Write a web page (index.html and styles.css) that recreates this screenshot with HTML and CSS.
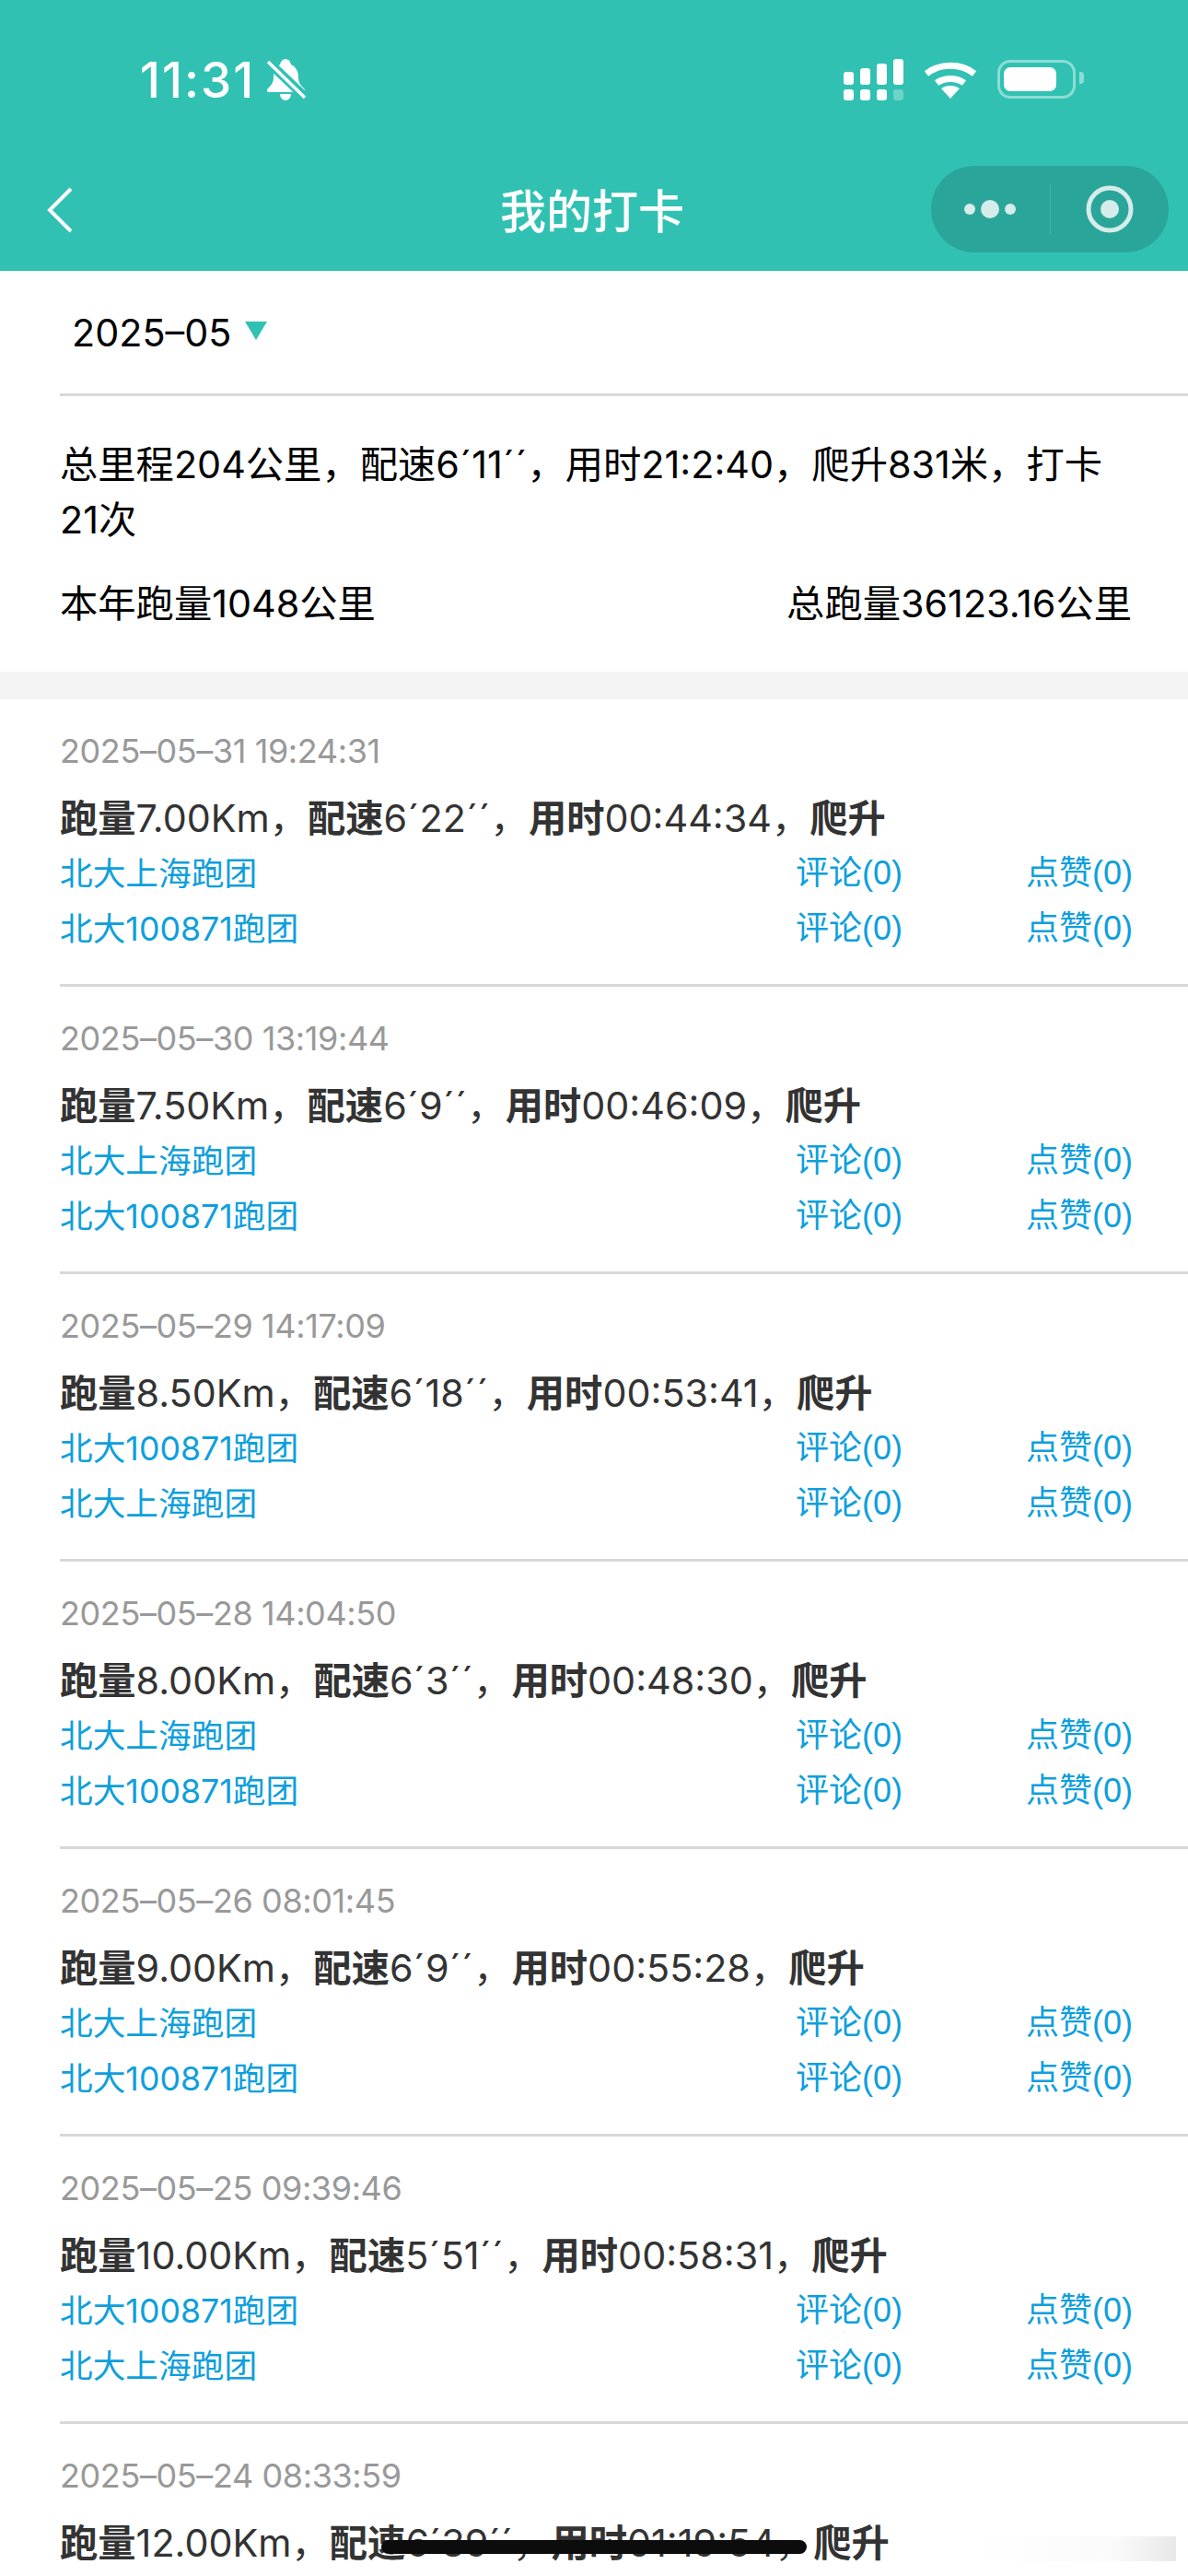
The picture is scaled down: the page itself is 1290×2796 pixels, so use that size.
FILE: index.html
```html
<!DOCTYPE html>
<html lang="zh-CN">
<head>
    <meta charset="UTF-8">
    <meta name="viewport" content="width=device-width, initial-scale=1.0">
    <title>我的打卡</title>
    <link rel="stylesheet" href="styles.css">
</head>
<body>
    <header class="top">
        <div class="status">
            <div class="status-left">
                <span class="clock">11:31</span>
                <svg class="bell" viewBox="0 0 44 46" width="44" height="46">
                    <path d="M21 0c3 0 5 2 6 6 6 3 8 8 8 14 0 6 3 9 6 12 2 2 1 4-1 4H3c-2 0-3-2-1-4 3-3 6-6 6-12 0-6 2-11 7-14 1-4 3-6 6-6z" fill="#fff"/>
                    <path d="M15 38h12c0 4-3 7-6 7s-6-3-6-7z" fill="#fff"/>
                    <path d="M0 1l44 42" stroke="#30c1b3" stroke-width="10"/>
                    <path d="M2 3l40 39" stroke="#fff" stroke-width="3.5"/>
                </svg>
            </div>
            <div class="status-right">
                <svg viewBox="0 0 65 46" width="65" height="46">
                    <g fill="#fff">
                        <rect x="0" y="14" width="11" height="14" rx="3"/>
                        <rect x="18" y="10" width="11" height="18" rx="3"/>
                        <rect x="36" y="5" width="11" height="23" rx="3"/>
                        <rect x="54" y="0" width="11" height="28" rx="3"/>
                        <rect x="0" y="33" width="11" height="12" rx="3"/>
                        <rect x="18" y="33" width="11" height="12" rx="3"/>
                        <rect x="36" y="33" width="11" height="12" rx="3"/>
                        <rect x="54" y="33" width="11" height="12" rx="3" opacity="0.3"/>
                    </g>
                </svg>
                <svg class="wifi" viewBox="0 0 58 42" width="58" height="42">
                    <path d="M3 15a38 32 0 0 1 52 0" fill="none" stroke="#fff" stroke-width="7"/>
                    <path d="M14 25a23 19 0 0 1 30 0" fill="none" stroke="#fff" stroke-width="7"/>
                    <path d="M29 42L19 31a15 12 0 0 1 20 0z" fill="#fff"/>
                </svg>
                <div class="battery"><div class="battery-fill"></div></div>
            </div>
        </div>
        <div class="nav">
            <svg class="back" viewBox="0 0 28 50" width="28" height="50">
                <path d="M26 2L3 25l23 23" fill="none" stroke="#fff" stroke-width="4"/>
            </svg>
            <div class="nav-title">我的打卡</div>
            <div class="capsule">
                <div class="capsule-part">
                    <svg viewBox="0 0 56 22" width="56" height="22">
                        <circle cx="6" cy="11" r="6" fill="#d5ecea"/>
                        <circle cx="28" cy="11" r="10" fill="#d5ecea"/>
                        <circle cx="50" cy="11" r="6" fill="#d5ecea"/>
                    </svg>
                </div>
                <div class="capsule-line"></div>
                <div class="capsule-part">
                    <svg viewBox="0 0 52 52" width="52" height="52">
                        <circle cx="26" cy="26" r="23" fill="none" stroke="#d5ecea" stroke-width="5"/>
                        <circle cx="26" cy="26" r="10" fill="#d5ecea"/>
                    </svg>
                </div>
            </div>
        </div>
    </header>

    <section class="summary">
        <div class="month"><span>2025–05</span><i class="arrow"></i></div>
        <div class="summary-body">
            <p class="total">总里程204公里，配速6´11´´，用时21:2:40，爬升831米，打卡21次</p>
            <div class="totals">
                <span>本年跑量1048公里</span>
                <span>总跑量36123.16公里</span>
            </div>
        </div>
    </section>

    <main class="list">
        <article class="run">
            <div class="run-time">2025–05–31 19:24:31</div>
            <div class="run-info"><b>跑量</b>7.00Km，<b>配速</b>6´22´´，<b>用时</b>00:44:34，<b>爬升</b></div>
            <div class="team"><span class="team-name">北大上海跑团</span><span class="team-comment">评论(0)</span><span class="team-like">点赞(0)</span></div>
            <div class="team"><span class="team-name">北大100871跑团</span><span class="team-comment">评论(0)</span><span class="team-like">点赞(0)</span></div>
        </article>
        <article class="run">
            <div class="run-time">2025–05–30 13:19:44</div>
            <div class="run-info"><b>跑量</b>7.50Km，<b>配速</b>6´9´´，<b>用时</b>00:46:09，<b>爬升</b></div>
            <div class="team"><span class="team-name">北大上海跑团</span><span class="team-comment">评论(0)</span><span class="team-like">点赞(0)</span></div>
            <div class="team"><span class="team-name">北大100871跑团</span><span class="team-comment">评论(0)</span><span class="team-like">点赞(0)</span></div>
        </article>
        <article class="run">
            <div class="run-time">2025–05–29 14:17:09</div>
            <div class="run-info"><b>跑量</b>8.50Km，<b>配速</b>6´18´´，<b>用时</b>00:53:41，<b>爬升</b></div>
            <div class="team"><span class="team-name">北大100871跑团</span><span class="team-comment">评论(0)</span><span class="team-like">点赞(0)</span></div>
            <div class="team"><span class="team-name">北大上海跑团</span><span class="team-comment">评论(0)</span><span class="team-like">点赞(0)</span></div>
        </article>
        <article class="run">
            <div class="run-time">2025–05–28 14:04:50</div>
            <div class="run-info"><b>跑量</b>8.00Km，<b>配速</b>6´3´´，<b>用时</b>00:48:30，<b>爬升</b></div>
            <div class="team"><span class="team-name">北大上海跑团</span><span class="team-comment">评论(0)</span><span class="team-like">点赞(0)</span></div>
            <div class="team"><span class="team-name">北大100871跑团</span><span class="team-comment">评论(0)</span><span class="team-like">点赞(0)</span></div>
        </article>
        <article class="run">
            <div class="run-time">2025–05–26 08:01:45</div>
            <div class="run-info"><b>跑量</b>9.00Km，<b>配速</b>6´9´´，<b>用时</b>00:55:28，<b>爬升</b></div>
            <div class="team"><span class="team-name">北大上海跑团</span><span class="team-comment">评论(0)</span><span class="team-like">点赞(0)</span></div>
            <div class="team"><span class="team-name">北大100871跑团</span><span class="team-comment">评论(0)</span><span class="team-like">点赞(0)</span></div>
        </article>
        <article class="run">
            <div class="run-time">2025–05–25 09:39:46</div>
            <div class="run-info"><b>跑量</b>10.00Km，<b>配速</b>5´51´´，<b>用时</b>00:58:31，<b>爬升</b></div>
            <div class="team"><span class="team-name">北大100871跑团</span><span class="team-comment">评论(0)</span><span class="team-like">点赞(0)</span></div>
            <div class="team"><span class="team-name">北大上海跑团</span><span class="team-comment">评论(0)</span><span class="team-like">点赞(0)</span></div>
        </article>
        <article class="run run-last">
            <div class="run-time">2025–05–24 08:33:59</div>
            <div class="run-info"><b>跑量</b>12.00Km，<b>配速</b>6´39´´，<b>用时</b>01:19:54，<b>爬升</b></div>
        </article>
    </main>

    <div class="smudge"></div>
    <div class="home-bar"></div>
</body>
</html>
```

FILE: styles.css
```css
html, body {
    margin: 0;
    padding: 0;
}
body {
    height: 2796px;
    overflow: hidden;
    position: relative;
    background: #fff;
    font-family: Inter, "Noto Sans CJK SC", sans-serif;
    color: #000;
}
.top {
    height: 294px;
    background: #30c1b3;
    color: #fff;
}
.status {
    height: 168px;
    box-sizing: border-box;
    padding: 64px 115px 0 152px;
    display: flex;
    justify-content: space-between;
    align-items: flex-start;
}
.status-left {
    display: flex;
    align-items: center;
    gap: 12px;
}
.clock {
    font-size: 53px;
    line-height: 46px;
    font-weight: 500;
    letter-spacing: 2px;
}
.status-right {
    display: flex;
    align-items: flex-start;
    gap: 22px;
}
.wifi {
    margin-top: 1px;
}
.battery {
    width: 70px;
    height: 26px;
    margin-top: 1px;
    margin-right: 7px;
    border: 3px solid rgba(255, 255, 255, 0.45);
    border-radius: 14px;
    padding: 5px 5px 5px 4px;
    position: relative;
}
.battery::after {
    content: "";
    position: absolute;
    right: -12px;
    top: 10px;
    width: 5px;
    height: 13px;
    background: rgba(255, 255, 255, 0.45);
    border-radius: 0 4px 4px 0;
}
.battery-fill {
    width: 57px;
    height: 100%;
    background: #fff;
    border-radius: 7px;
}
.nav {
    height: 126px;
    position: relative;
    display: flex;
    align-items: center;
    justify-content: center;
}
.back {
    position: absolute;
    left: 51px;
    top: 35px;
}
.nav-title {
    font-size: 50px;
    font-weight: 500;
    width: 100%;
    padding-right: 4px;
    margin-top: -10px;
    box-sizing: border-box;
    text-align: center;
}
.capsule {
    position: absolute;
    right: 21px;
    top: 12px;
    width: 258px;
    height: 94px;
    border-radius: 47px;
    background: #2aa599;
    display: flex;
    align-items: center;
}
.capsule-part {
    flex: 1;
    display: flex;
    justify-content: center;
}
.capsule-line {
    width: 1px;
    height: 56px;
    background: rgba(255, 255, 255, 0.15);
}
.month {
    height: 133px;
    padding: 0 0 0 78px;
    box-sizing: border-box;
    display: flex;
    align-items: center;
    gap: 15px;
    font-size: 41.3px;
}
.arrow {
    width: 0;
    height: 0;
    margin-top: -4px;
    border-left: 12px solid transparent;
    border-right: 12px solid transparent;
    border-top: 20px solid #30c1b3;
}
.summary {
    border-bottom: 30px solid #f4f4f4;
}
.summary-body {
    margin-left: 65px;
    border-top: 3px solid #d8d8d8;
    padding: 44px 61px 0 0;
    height: 302px;
    box-sizing: border-box;
    font-size: 41.3px;
    line-height: 60px;
}
.total {
    margin: 0;
}
.totals {
    display: flex;
    justify-content: space-between;
    margin-top: 31px;
}
.run {
    margin-left: 65px;
    height: 312px;
    box-sizing: border-box;
    border-bottom: 3px solid #d8d8d8;
    padding-top: 29px;
}
.run-last {
    height: 165px;
    border-bottom: 0;
}
.run-time {
    font-size: 36px;
    line-height: 54px;
    letter-spacing: -0.4px;
    color: #999;
}
.run-info {
    margin-top: 16px;
    font-size: 41.3px;
    line-height: 60px;
    color: #333;
}
.team {
    display: flex;
    font-size: 36px;
    line-height: 60px;
    color: #0e9fdc;
    padding-right: 60px;
}
.team-name {
    flex: 1;
    font-size: 35.7px;
}
.team-comment, .team-like {
    font-family: "Liberation Sans", "Noto Sans CJK SC", sans-serif;
}
.team-like {
    margin-left: 134px;
}
.smudge {
    position: absolute;
    left: 1060px;
    top: 2753px;
    width: 217px;
    height: 27px;
    background: linear-gradient(to right, rgba(0, 0, 0, 0), rgba(0, 0, 0, 0.02) 70%, rgba(0, 0, 0, 0.09));
}
.home-bar {
    position: absolute;
    left: 414px;
    top: 2757px;
    width: 462px;
    height: 15px;
    border-radius: 8px;
    background: #0c0c0c;
}
```
